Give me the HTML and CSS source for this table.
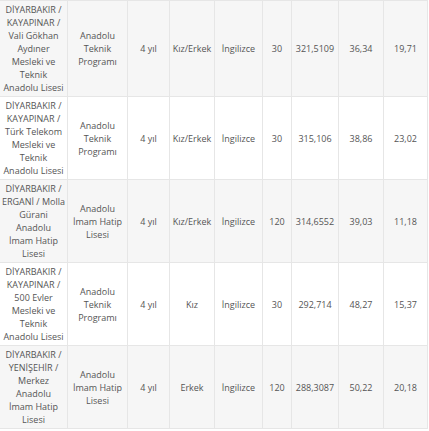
FILE: index.html
```html
<!DOCTYPE html>
<html lang="tr">
<head>
<meta charset="utf-8">
<link rel="stylesheet" href="styles.css">
</head>
<body>
<table class="grid">
  <colgroup>
    <col class="c1"><col class="c2"><col class="c3"><col class="c4"><col class="c5"><col class="c6"><col class="c7"><col class="c8"><col class="c9">
  </colgroup>
  <tbody>
    <tr class="alt">
      <td>DİYARBAKIR /<br>KAYAPINAR /<br>Vali Gökhan<br>Aydıner<br>Mesleki ve<br>Teknik<br>Anadolu Lisesi</td>
      <td>Anadolu<br>Teknik<br>Programı</td>
      <td>4 yıl</td>
      <td>Kız/Erkek</td>
      <td>İngilizce</td>
      <td>30</td>
      <td>321,5109</td>
      <td>36,34</td>
      <td>19,71</td>
    </tr>
    <tr>
      <td>DİYARBAKIR /<br>KAYAPINAR /<br>Türk Telekom<br>Mesleki ve<br>Teknik<br>Anadolu Lisesi</td>
      <td>Anadolu<br>Teknik<br>Programı</td>
      <td>4 yıl</td>
      <td>Kız/Erkek</td>
      <td>İngilizce</td>
      <td>30</td>
      <td>315,106</td>
      <td>38,86</td>
      <td>23,02</td>
    </tr>
    <tr class="alt">
      <td>DİYARBAKIR /<br>ERGANİ / Molla<br>Gürani<br>Anadolu<br>İmam Hatip<br>Lisesi</td>
      <td>Anadolu<br>İmam Hatip<br>Lisesi</td>
      <td>4 yıl</td>
      <td>Kız/Erkek</td>
      <td>İngilizce</td>
      <td>120</td>
      <td>314,6552</td>
      <td>39,03</td>
      <td>11,18</td>
    </tr>
    <tr>
      <td>DİYARBAKIR /<br>KAYAPINAR /<br>500 Evler<br>Mesleki ve<br>Teknik<br>Anadolu Lisesi</td>
      <td>Anadolu<br>Teknik<br>Programı</td>
      <td>4 yıl</td>
      <td>Kız</td>
      <td>İngilizce</td>
      <td>30</td>
      <td>292,714</td>
      <td>48,27</td>
      <td>15,37</td>
    </tr>
    <tr class="alt">
      <td>DİYARBAKIR /<br>YENİŞEHİR /<br>Merkez<br>Anadolu<br>İmam Hatip<br>Lisesi</td>
      <td>Anadolu<br>İmam Hatip<br>Lisesi</td>
      <td>4 yıl</td>
      <td>Erkek</td>
      <td>İngilizce</td>
      <td>120</td>
      <td>288,3087</td>
      <td>50,22</td>
      <td>20,18</td>
    </tr>
  </tbody>
</table>
</body>
</html>
```
FILE: styles.css
```css
html, body {
  margin: 0;
  padding: 0;
  background: #ffffff;
}
.grid {
  border-collapse: collapse;
  table-layout: fixed;
  width: 429px;
  margin: 0 0 0 -1px;
  font-family: "Open Sans", "Liberation Sans", sans-serif;
  font-size: 9px;
  line-height: 13px;
  color: #555555;
}
.c1 { width: 68px; }
.c2 { width: 60px; }
.c3 { width: 42px; }
.c4 { width: 45px; }
.c5 { width: 48px; }
.c6 { width: 29px; }
.c7 { width: 47px; }
.c8 { width: 45px; }
.c9 { width: 44px; }
.grid td {
  border: 1px solid #e6e6e6;
  padding: 2px 0;
  text-align: center;
  vertical-align: middle;
  white-space: nowrap;
}
.grid tr.alt td {
  background: #f6f6f6;
}
```
